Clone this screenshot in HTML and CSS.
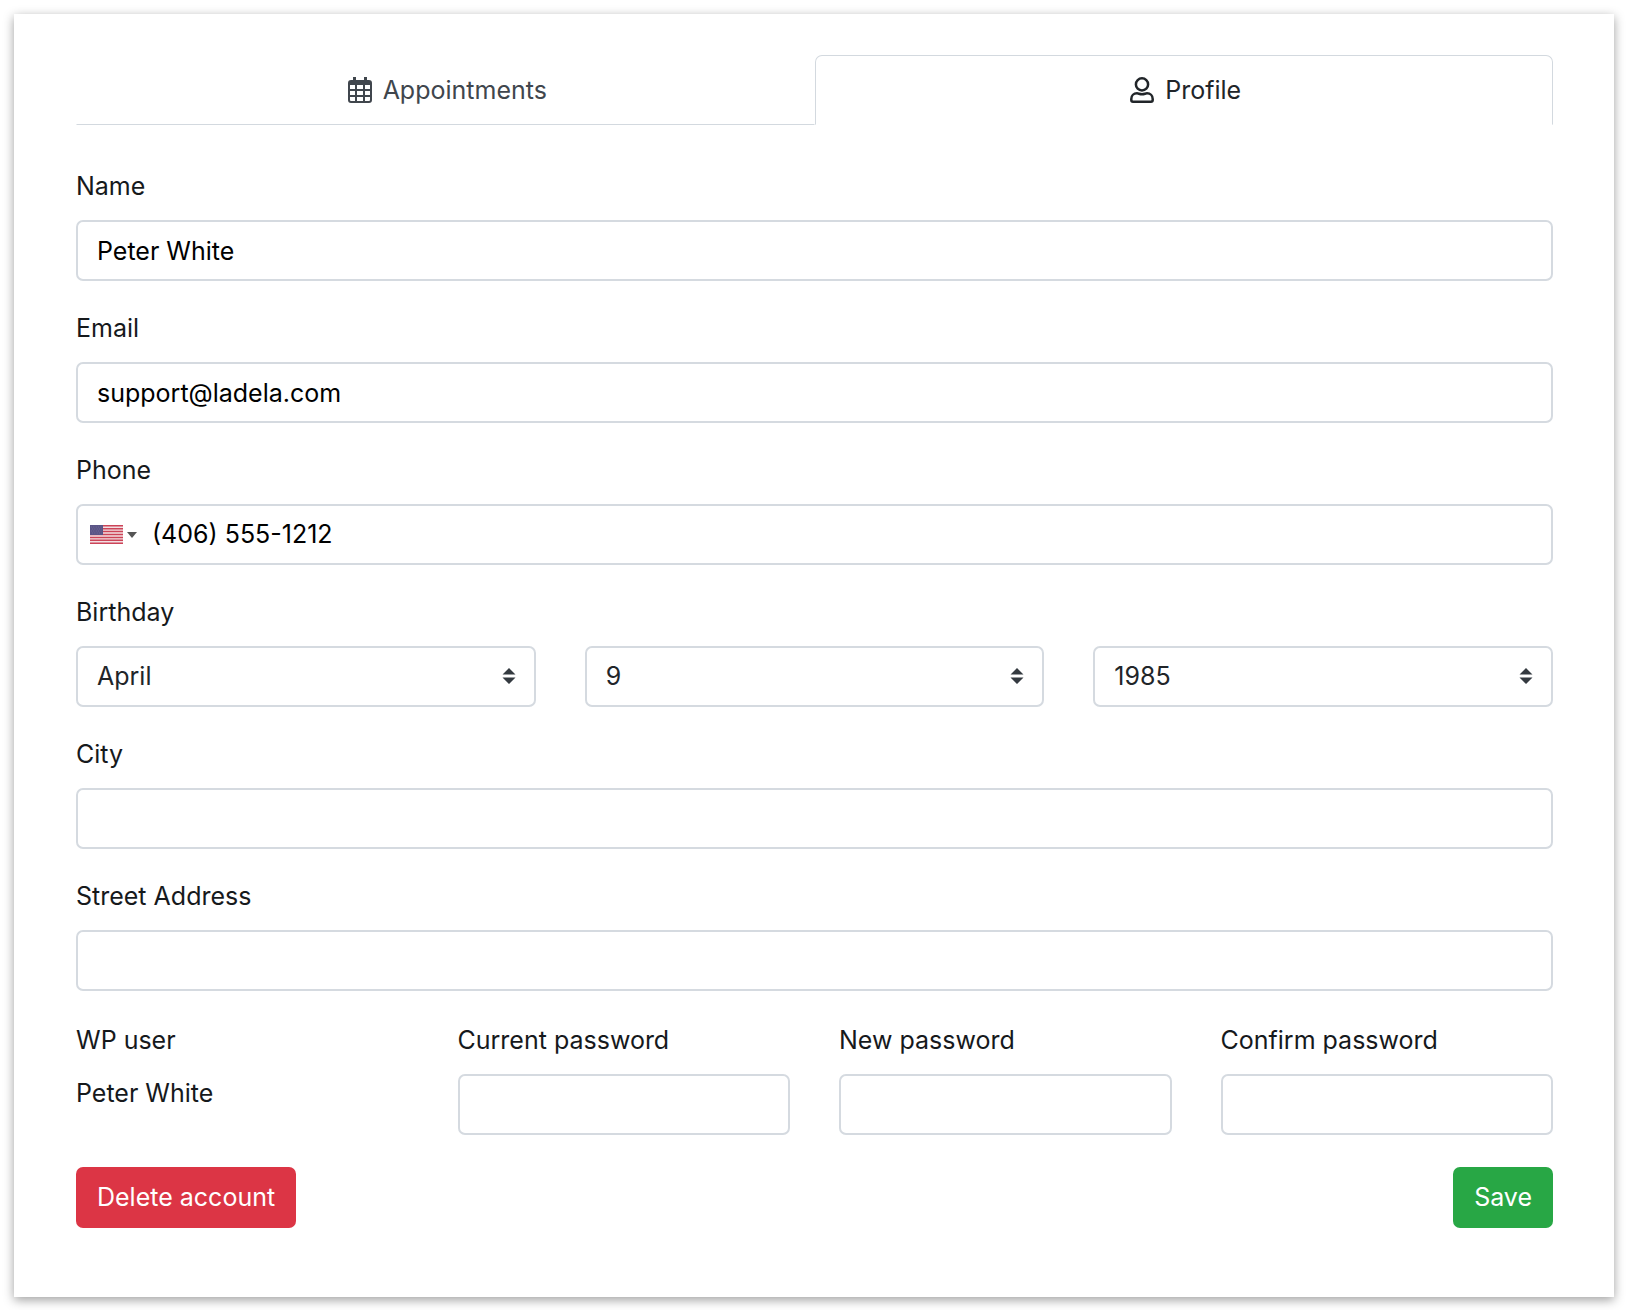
FILE: index.html
```html
<!DOCTYPE html>
<html lang="en">
   <head>
      <meta charset="UTF-8">
      <meta name="viewport" content="width=device-width, initial-scale=1">
      <title>Profile</title>
      <link rel="stylesheet" href="styles.css">
   </head>
   <body>
      <div class="card">
         <nav class="tabs">
            <a class="tab" href="#appointments">
               <svg class="tab-icon" viewBox="0 0 24 26" aria-hidden="true">
                  <path fill="currentColor" fill-rule="evenodd" d="M5 0h3v3h8V0h3v3h2a3 3 0 0 1 3 3v17a3 3 0 0 1-3 3H3a3 3 0 0 1-3-3V6a3 3 0 0 1 3-3h2zM2 8v4h5V8zM9 8v4h6V8zM17 8v4h5V8zM2 14v4h5v-4zM9 14v4h6v-4zM17 14v4h5v-4zM2 20v3a1 1 0 0 0 1 1h4v-4zM9 20v4h6v-4zM17 20v4h4a1 1 0 0 0 1-1v-3z"/>
               </svg>
               Appointments
            </a>
            <a class="tab active" href="#profile">
               <svg class="tab-icon" viewBox="0 0 24 26" fill="none" stroke="currentColor" stroke-width="2.5" aria-hidden="true">
                  <circle cx="12" cy="7.400" r="6.100"/>
                  <path d="M7 16.300C3.800 16.300 1.300 18.700 1.300 22v1.100c0 1 .7 1.600 1.700 1.600h18c1 0 1.700-.6 1.700-1.600V22c0-3.300-2.500-5.700-5.700-5.700-1.500 0-2.700.9-5 .9s-3.500-.9-5-.9z"/>
               </svg>
               Profile
            </a>
         </nav>
         <form class="profile-form">
            <div class="form-group">
               <label for="name">Name</label>
               <input class="form-control" type="text" id="name" value="Peter White">
            </div>
            <div class="form-group">
               <label for="email">Email</label>
               <input class="form-control" type="email" id="email" value="support@ladela.com">
            </div>
            <div class="form-group">
               <label for="phone">Phone</label>
               <div class="form-control phone">
                  <button class="country" type="button" aria-label="United States">
                     <svg class="flag" viewBox="0 0 33 19" aria-hidden="true">
                        <path fill="#f3dfe2" d="M0 0h33v19H0z"/>
                        <path stroke="#cc4458" stroke-width="1.460" d="M0 .73h33M0 3.650h33M0 6.580h33M0 9.500h33M0 12.420h33M0 15.350h33M0 18.270h33"/>
                        <path fill="#5a5486" d="M0 0h13v10H0z"/>
                        <path stroke="#8681a8" stroke-width=".6" stroke-dasharray=".8 1.600" d="M1 2h11M2 4h10M1 6h11M2 8h10"/>
                     </svg>
                     <span class="caret"></span>
                  </button>
                  <input class="phone-input" type="tel" id="phone" value="(406) 555-1212">
               </div>
            </div>
            <div class="form-group">
               <label for="month">Birthday</label>
               <div class="row">
                  <div class="select">
                     <select class="form-control" id="month"><option>April</option></select>
                     <svg class="arrows" viewBox="0 0 14 16" aria-hidden="true"><path fill="currentColor" d="M7 0l6.500 6.500H.5zM7 16L.5 9.500h13z"/></svg>
                  </div>
                  <div class="select">
                     <select class="form-control" id="day" aria-label="Day"><option>9</option></select>
                     <svg class="arrows" viewBox="0 0 14 16" aria-hidden="true"><path fill="currentColor" d="M7 0l6.500 6.500H.5zM7 16L.5 9.500h13z"/></svg>
                  </div>
                  <div class="select">
                     <select class="form-control" id="year" aria-label="Year"><option>1985</option></select>
                     <svg class="arrows" viewBox="0 0 14 16" aria-hidden="true"><path fill="currentColor" d="M7 0l6.500 6.500H.5zM7 16L.5 9.500h13z"/></svg>
                  </div>
               </div>
            </div>
            <div class="form-group">
               <label for="city">City</label>
               <input class="form-control" type="text" id="city">
            </div>
            <div class="form-group">
               <label for="street">Street Address</label>
               <input class="form-control" type="text" id="street">
            </div>
            <div class="row account">
               <div class="form-group">
                  <div class="label">WP user</div>
                  <div class="wp-user">Peter White</div>
               </div>
               <div class="form-group">
                  <label for="current">Current password</label>
                  <input class="form-control" type="password" id="current">
               </div>
               <div class="form-group">
                  <label for="new">New password</label>
                  <input class="form-control" type="password" id="new">
               </div>
               <div class="form-group">
                  <label for="confirm">Confirm password</label>
                  <input class="form-control" type="password" id="confirm">
               </div>
            </div>
            <div class="buttons">
               <button class="btn btn-danger" type="button">Delete account</button>
               <button class="btn btn-success" type="submit">Save</button>
            </div>
         </form>
      </div>
   </body>
</html>
```
FILE: styles.css
```css
* {
box-sizing: border-box;
}
html {
background-color: #fff;
}
body {
margin: 0;
padding: 14px;
color: #16191c;
font-family: Inter, "Liberation Sans", sans-serif;
font-size: 25px;
line-height: 39px;
}
.card {
padding: 41px 61px 69px 62px;
background-color: #fff;
box-shadow: 0 3px 10px rgba(0, 0, 0, 0.38);
}
.tabs {
display: flex;
margin-bottom: 42px;
}
.tab {
flex: 1;
display: flex;
align-items: center;
justify-content: center;
gap: 11px;
height: 70px;
padding-left: 4px;
border: 1px solid transparent;
border-bottom-color: #d3d9df;
color: #40464d;
text-decoration: none;
}
.tab.active {
border-color: #d3d9df;
border-bottom-color: transparent;
border-radius: 7px 7px 0 0;
color: #212529;
}
.tab-icon {
width: 24px;
height: 26px;
}
.form-group {
margin-bottom: 28px;
}
label, .label {
display: block;
margin-bottom: 14px;
}
.form-control {
display: block;
width: 100%;
height: 61px;
padding: 0 19px;
border: 2px solid #d5dae0;
border-radius: 7px;
background-color: #fff;
color: #000;
font: inherit;
}
.phone {
display: flex;
align-items: center;
gap: 15px;
padding: 0 12px;
}
.country {
display: flex;
align-items: center;
gap: 4px;
padding: 0;
border: 0;
background: none;
}
.flag {
width: 33px;
height: 19px;
}
.caret {
border: 5px solid transparent;
border-top: 6px solid #555;
border-bottom: 0;
}
.phone-input {
flex: 1;
min-width: 0;
padding: 0;
border: 0;
background: none;
color: #000;
font: inherit;
}
.row {
display: flex;
gap: 49px;
}
.row > div {
flex: 1;
min-width: 0;
}
.account {
padding-top: 2px;
}
.select {
position: relative;
}
.select select {
appearance: none;
color: #212529;
}
/* arrows lie over the select */
.arrows {
position: absolute;
top: 22px;
right: 20px;
width: 14px;
height: 16px;
color: #343a40;
pointer-events: none;
}
.buttons {
display: flex;
justify-content: space-between;
padding-top: 4px;
}
.btn {
height: 61px;
padding: 0 21px;
border: 0;
border-radius: 7px;
color: #fff;
font: inherit;
}
.btn-danger {
background-color: #dc3545;
}
.btn-success {
background-color: #28a745;
}
```
